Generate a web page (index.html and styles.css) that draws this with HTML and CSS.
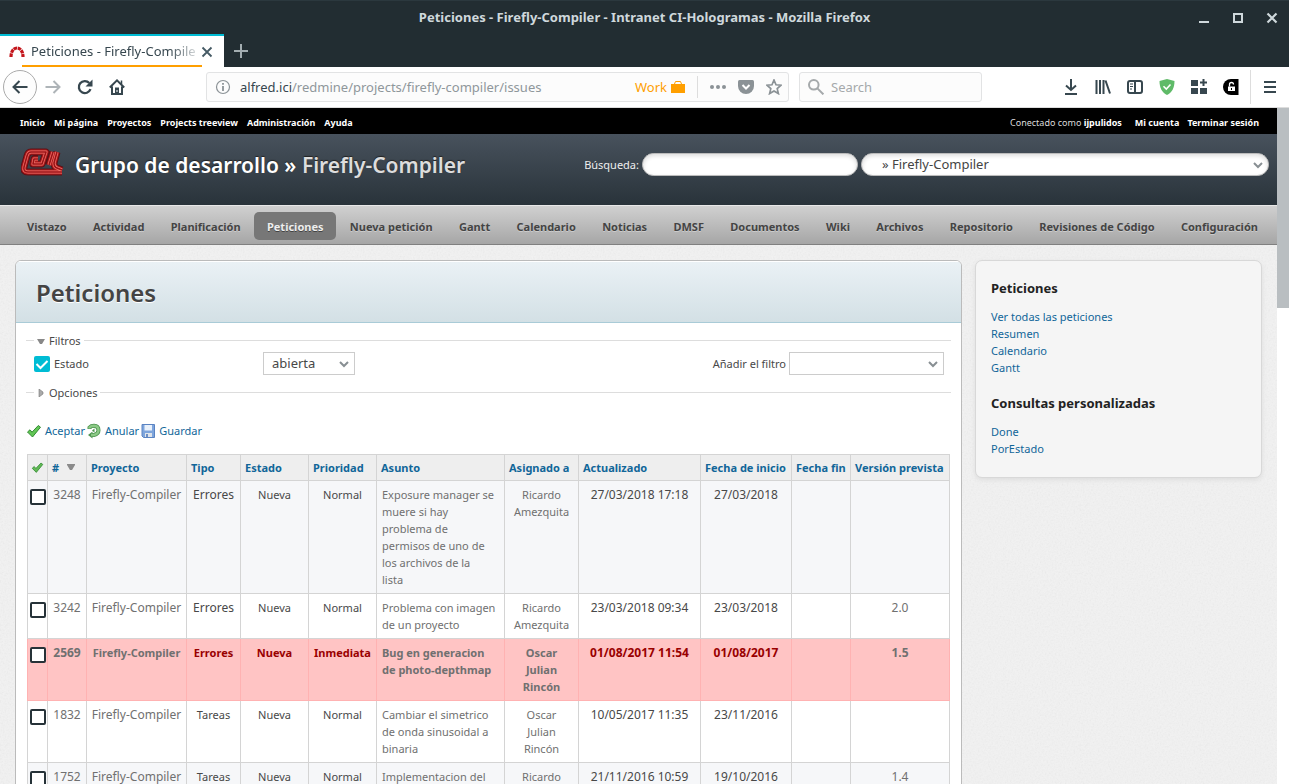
FILE: index.html
```html
<!DOCTYPE html>
<html lang="es">
<head>
<meta charset="utf-8">
<title>Peticiones - Firefly-Compiler - Intranet CI-Hologramas</title>
<link rel="stylesheet" href="styles.css">
</head>
<body>
<header class="browser">
  <div class="titlebar">
    <span class="window-title">Peticiones - Firefly-Compiler - Intranet CI-Hologramas - Mozilla Firefox</span>
    <div class="window-buttons">
      <button aria-label="Minimizar"><svg width="12" height="12" viewBox="0 0 12 12"><path d="M1 10h10" stroke-width="2"/></svg></button>
      <button aria-label="Maximizar"><svg width="12" height="12" viewBox="0 0 12 12"><rect x="2" y="2" width="8" height="8" stroke-width="2"/></svg></button>
      <button aria-label="Cerrar"><svg width="12" height="12" viewBox="0 0 12 12"><path d="M1.500 1.500l9 9m0-9l-9 9" stroke-width="2.200"/></svg></button>
    </div>
  </div>
  <div class="tabs">
    <div class="tab">
      <svg class="favicon" width="16" height="16" viewBox="0 0 16 16"><path d="M2 13c0-5.500 2.500-9 6-9s6 3.500 6 9" fill="none" stroke="#c4161c" stroke-width="3.200" stroke-dasharray="3.600 .6"/></svg>
      <span class="tab-title">Peticiones - Firefly-Compile</span>
      <button class="tab-close" aria-label="Cerrar pestaña"><svg width="12" height="12" viewBox="0 0 12 12"><path d="M1.500 1.500l9 9m0-9l-9 9" stroke-width="1.800"/></svg></button>
    </div>
    <button class="new-tab" aria-label="Nueva pestaña"><svg width="14" height="14" viewBox="0 0 14 14"><path d="M7 0v14M0 7h14" stroke-width="2"/></svg></button>
  </div>
  <div class="toolbar">
    <button class="back" aria-label="Atrás"><svg class="ico" viewBox="0 0 16 16"><path d="M15.500 8H1.500M7.500 2L1.500 8l6 6"/></svg></button>
    <button class="tool dim" aria-label="Adelante"><svg class="ico" viewBox="0 0 16 16"><path d="M.5 8h14M8.500 2l6 6-6 6"/></svg></button>
    <button class="tool" aria-label="Recargar"><svg class="ico" viewBox="0 0 16 16"><path d="M13.500 10.200A6 6 0 1 1 12.300 4" stroke-width="2.300"/><path class="solid" d="M15.500.5v7h-7z"/></svg></button>
    <button class="tool" aria-label="Inicio"><svg class="ico" viewBox="0 0 16 16"><path d="M.8 8.500L8 1.400l7.200 7.100M3 7.500V15h10V7.500"/><path class="solid" d="M6 8.500h4V15H6z"/><path d="M8 11v2" stroke="#fff" stroke-width="1"/><path d="M12.500 1.500V5" stroke-width="1.500"/></svg></button>
    <div class="urlbar">
      <svg class="ico grey info" viewBox="0 0 16 16"><circle cx="8" cy="8" r="6.500" stroke-width="1.200"/><path d="M8 7v5M8 4v1.800" stroke-width="1.800"/></svg>
      <span class="url">alfred.ici<span>/redmine/projects/firefly-compiler/issues</span></span>
      <span class="work">Work <svg width="14" height="14" viewBox="0 0 14 14"><path d="M0 4h14v9H0z" fill="#ff9f00"/><path d="M3.500 4l1-2.500h5l1 2.500" fill="none" stroke="#ff9f00"/></svg></span>
      <i class="divider"></i>
      <svg class="ico grey" viewBox="0 0 16 16"><circle class="solid" cx="2" cy="8" r="2"/><circle class="solid" cx="8" cy="8" r="2"/><circle class="solid" cx="14" cy="8" r="2"/></svg>
      <svg class="ico grey" viewBox="0 0 16 16"><path class="solid" d="M1.500 1h13Q16 1 16 2.500V7a8 8 0 0 1-16 0V2.500Q0 1 1.500 1z"/><path d="M4.500 6L8 9.500 11.500 6" stroke="#fff"/></svg>
      <svg class="ico grey" viewBox="0 0 16 16"><path d="M8 1l2 4.800 5 .4-3.800 3.400 1.200 5L8 12l-4.400 2.600 1.200-5L1 6.200l5-.4z" stroke-width="1.700"/></svg>
    </div>
    <label class="search-web">
      <svg class="ico" viewBox="0 0 16 16"><circle cx="5.800" cy="5.800" r="4.800"/><path d="M9.400 9.400l6 6"/></svg>
      <input type="text" placeholder="Search" aria-label="Search">
    </label>
    <div class="extensions">
      <button class="tool" aria-label="Descargas"><svg class="ico" viewBox="0 0 16 16"><path d="M8 0v11M3 6.500L8 11l5-4.500M2 15h12"/></svg></button>
      <button class="tool" aria-label="Catálogo"><svg class="ico" viewBox="0 0 16 16"><path d="M1.500 1v14M5 1v14M8.500 1v14M10.500 1.500l4.500 13"/></svg></button>
      <button class="tool" aria-label="Barra lateral"><svg class="ico" viewBox="0 0 16 16"><rect x="1" y="2" width="14" height="12" rx="2"/><path d="M8 2v12"/><path d="M3 5h3M3 7.500h3M3 10h2" stroke-width="1"/></svg></button>
      <button class="tool" aria-label="Protección"><svg class="ico" viewBox="0 0 16 16"><path d="M8 0l7.500 2c0 7-2.500 11.500-7.500 14C3 13.500.5 9 .5 2z" fill="#5fba68" stroke="none"/><path d="M4.500 7.200l2.800 2.800 4.200-4.500" stroke="#fff" stroke-width="1.600"/></svg></button>
      <button class="tool" aria-label="Complementos"><svg class="ico" viewBox="0 0 16 16"><path class="solid" d="M0 1h7v6H0zM0 9h7v6H0zM9 9h7v6H9z"/><path d="M12.500 0v7M9 3.500h7"/></svg></button>
      <button class="tool" aria-label="Contraseñas"><svg class="ico" viewBox="0 0 16 16"><path d="M8 0h7.500v16H8A8 8 0 0 1 8 0z" fill="#000" stroke="none"/><path d="M5 7.500h7V12H5z" fill="#fff" stroke="none"/><path d="M6.500 7.500V5.500q0-2 2-2t2 2" stroke="#fff" stroke-width="1.300"/><path d="M8.500 9v2" stroke="#000" stroke-width="1"/></svg></button>
      <i class="divider tall"></i>
      <button class="tool" aria-label="Menú"><svg class="ico" viewBox="0 0 16 16"><path d="M2 3h12M2 8h12M2 13h12"/></svg></button>
    </div>
  </div>
</header>
<div class="viewport">
  <div class="page">
    <nav class="topmenu">
      <div class="links"><a href="#">Inicio</a><a href="#">Mi página</a><a href="#">Proyectos</a><a href="#">Projects treeview</a><a href="#">Administración</a><a href="#">Ayuda</a></div>
      <div class="links account"><span>Conectado como <a href="#">ijpulidos</a></span><a href="#">Mi cuenta</a><a href="#">Terminar sesión</a></div>
    </nav>
    <div class="banner">
      <svg class="logo" width="44" height="30" viewBox="0 0 44 30"><defs><path id="mark" d="M17 12h-4l-1 5h9l4-12H10Q7 5 6 9L3 20q-1 5 4 5h34M36 5l-3 11q0 4 3 5l5 2M32 5l-4 13"/></defs><g fill="none" stroke-linejoin="round"><use href="#mark" stroke="#5e1015" stroke-width="7"/><use href="#mark" stroke="#b01a1c" stroke-width="5"/><use href="#mark" stroke="#f0746c" stroke-width="3"/><use href="#mark" stroke="#9c1216" stroke-width="1.600"/></g></svg>
      <h1>Grupo de desarrollo » <span>Firefly-Compiler</span></h1>
      <form class="quick">
        <label for="q">Búsqueda:</label>
        <input id="q" type="text">
        <select aria-label="Proyecto"><option>» Firefly-Compiler</option></select>
      </form>
    </div>
    <nav class="mainmenu">
      <a href="#">Vistazo</a><a href="#">Actividad</a><a href="#">Planificación</a><a href="#" class="selected">Peticiones</a><a href="#">Nueva petición</a><a href="#">Gantt</a><a href="#">Calendario</a><a href="#">Noticias</a><a href="#">DMSF</a><a href="#">Documentos</a><a href="#">Wiki</a><a href="#">Archivos</a><a href="#">Repositorio</a><a href="#">Revisiones de Código</a><a href="#">Configuración</a>
    </nav>
    <div class="main">
      <main class="content">
        <h2>Peticiones</h2>
        <form class="query">
          <fieldset>
            <legend><svg width="8" height="8" viewBox="0 0 8 8"><path d="M0 2h8L5 7H3z" fill="#888"/></svg>Filtros</legend>
            <div class="filters">
              <label class="filter"><input type="checkbox" class="check" checked>Estado</label>
              <select class="operator" aria-label="Operador"><option>abierta</option></select>
              <label class="add" for="add">Añadir el filtro</label>
              <select id="add" class="add-filter"><option></option></select>
            </div>
          </fieldset>
          <fieldset class="options">
            <legend><svg width="8" height="8" viewBox="0 0 8 8"><path d="M2 0l4 3v2L2 8z" fill="#aaa" stroke="#777" stroke-width=".6"/></svg>Opciones</legend>
          </fieldset>
          <p class="actions">
            <a href="#"><svg width="16" height="16" viewBox="0 0 16 16"><path d="M1.500 9L4 6.800l2 2.400 6.300-6.700 2.200 1.700L6.500 14z" fill="#62c655" stroke="#338b34"/></svg>Aceptar</a>
            <a href="#"><svg width="16" height="16" viewBox="0 0 16 16"><path d="M3.500 6V4.500Q5 2.800 8 2.800q4.500.3 4.500 4.500 0 3.700-4.500 4.700H6" fill="none" stroke="#4f9450" stroke-width="4"/><path d="M6.500 8.500v7L2 12z" fill="#4f9450"/><path d="M3.500 5.500V4.500Q5 2.800 8 2.800q4.500.3 4.500 4.500 0 3.700-4.500 4.700H5" fill="none" stroke="#8bc985" stroke-width="2.400"/><path d="M8.500 5.500v4L6 7.500z" fill="#4f9450"/></svg>Anular</a>
            <a href="#"><svg width="16" height="16" viewBox="0 0 16 16"><path d="M2 1.500h12.500v13H3.500L2 13z" fill="#7ea5dc" stroke="#5a83c2"/><path d="M4.500 2h7.500v5.500H4.500z" fill="#e9f1fb"/><path d="M5 10h7v4H5z" fill="#dfe4ea"/><path d="M6 11h2v3H6z" fill="#6d8fc4"/></svg>Guardar</a>
          </p>
        </form>
        <table class="issues">
          <colgroup><col class="c-check"><col class="c-id"><col class="c-project"><col class="c-tracker"><col class="c-status"><col class="c-priority"><col><col class="c-assigned"><col class="c-updated"><col class="c-start"><col class="c-due"><col class="c-version"></colgroup>
          <thead><tr><th class="tick"><svg width="13" height="13" viewBox="0 0 16 16"><path d="M1.500 9L4 6.800l2 2.400 6.300-6.700 2.200 1.700L6.500 14z" fill="#62b955" stroke="#338b34"/></svg></th><th><a href="#">#<svg class="sort" width="8" height="6" viewBox="0 0 8 6"><path d="M0 0h8v1L5 6H3L0 1z" fill="#8a8a8a"/></svg></a></th><th><a href="#">Proyecto</a></th><th><a href="#">Tipo</a></th><th><a href="#">Estado</a></th><th><a href="#">Prioridad</a></th><th><a href="#">Asunto</a></th><th><a href="#">Asignado a</a></th><th><a href="#">Actualizado</a></th><th><a href="#">Fecha de inicio</a></th><th><a href="#">Fecha fin</a></th><th><a href="#">Versión prevista</a></th></tr></thead>
          <tbody>
            <tr class="odd"><td class="tick"><input type="checkbox" class="check" aria-label="3248"></td><td class="wide"><a href="#">3248</a></td><td class="wide"><a href="#">Firefly-Compiler</a></td><td class="wide">Errores</td><td>Nueva</td><td>Normal</td><td class="subject"><a href="#">Exposure manager se<br>muere si hay<br>problema de<br>permisos de uno de<br>los archivos de la<br>lista</a></td><td><a href="#">Ricardo Amezquita</a></td><td class="wide">27/03/2018 17:18</td><td class="wide">27/03/2018</td><td></td><td></td></tr>
            <tr><td class="tick"><input type="checkbox" class="check" aria-label="3242"></td><td class="wide"><a href="#">3242</a></td><td class="wide"><a href="#">Firefly-Compiler</a></td><td class="wide">Errores</td><td>Nueva</td><td>Normal</td><td class="subject"><a href="#">Problema con imagen<br>de un proyecto</a></td><td><a href="#">Ricardo Amezquita</a></td><td class="wide">23/03/2018 09:34</td><td class="wide">23/03/2018</td><td></td><td class="wide"><a href="#">2.0</a></td></tr>
            <tr class="urgent"><td class="tick"><input type="checkbox" class="check" aria-label="2569"></td><td class="wide"><a href="#">2569</a></td><td><a href="#">Firefly-Compiler</a></td><td>Errores</td><td>Nueva</td><td>Inmediata</td><td class="subject"><a href="#">Bug en generacion<br>de photo-depthmap</a></td><td><a href="#">Oscar<br>Julian<br>Rincón</a></td><td class="wide">01/08/2017 11:54</td><td class="wide">01/08/2017</td><td></td><td class="wide"><a href="#">1.5</a></td></tr>
            <tr><td class="tick"><input type="checkbox" class="check" aria-label="1832"></td><td class="wide"><a href="#">1832</a></td><td class="wide"><a href="#">Firefly-Compiler</a></td><td>Tareas</td><td>Nueva</td><td>Normal</td><td class="subject"><a href="#">Cambiar el simetrico<br>de onda sinusoidal a<br>binaria</a></td><td><a href="#">Oscar<br>Julian<br>Rincón</a></td><td class="wide">10/05/2017 11:35</td><td class="wide">23/11/2016</td><td></td><td></td></tr>
            <tr class="odd last"><td class="tick"><input type="checkbox" class="check" aria-label="1752"></td><td class="wide"><a href="#">1752</a></td><td class="wide"><a href="#">Firefly-Compiler</a></td><td>Tareas</td><td>Nueva</td><td>Normal</td><td class="subject"><a href="#">Implementacion del</a></td><td><a href="#">Ricardo</a></td><td class="wide">21/11/2016 10:59</td><td class="wide">19/10/2016</td><td></td><td class="wide"><a href="#">1.4</a></td></tr>
          </tbody>
        </table>
      </main>
      <aside class="sidebar">
        <h3>Peticiones</h3>
        <a href="#">Ver todas las peticiones</a><a href="#">Resumen</a><a href="#">Calendario</a><a href="#">Gantt</a>
        <h3>Consultas personalizadas</h3>
        <a href="#">Done</a><a href="#">PorEstado</a>
      </aside>
    </div>
  </div>
  <div class="scrollbar"><i></i></div>
</div>
</body>
</html>
```
FILE: styles.css
```css
* { box-sizing: border-box; }
body { margin: 0; height: 100vh; overflow: hidden; display: flex; flex-direction: column; font: 12px/17px "Noto Sans", sans-serif; color: #484848; background: #fff; }
button { border: 0; background: none; padding: 0; display: flex; align-items: center; justify-content: center; }
a { text-decoration: none; color: #116699; }
h1, h2, h3, p { margin: 0; }
svg { flex: none; }
input, select { font: inherit; color: inherit; margin: 0; }

/* Browser window */
.browser { flex: none; background: #222d32; font-size: 13px; }
.titlebar { height: 34px; display: grid; grid-template-columns: 1fr auto 1fr; align-items: center; border-top: 1px solid #2b383e; color: #cfd8dc; font-weight: bold; }
.window-title { grid-column: 2; }
.window-buttons { display: flex; justify-content: flex-end; gap: 22px; padding-right: 11px; }
.window-buttons svg { fill: none; stroke: #cfd8dc; }
.tabs { display: flex; height: 33px; }
.tab { position: relative; width: 224px; padding: 0 11px 0 9px; display: flex; align-items: center; background: #fff; border-top: 2px solid #00bcd4; color: #37474f; }
.tab::after { content: ""; position: absolute; left: 22px; right: 22px; bottom: 0; height: 2px; background: #ff9f00; }
.tab-title { flex: 1; margin-left: 6px; white-space: nowrap; mask-image: linear-gradient(90deg, #000 84%, transparent 104%); }
.tab-close { margin-left: 5px; }
.tab-close svg { stroke: #455a64; }
.new-tab { width: 34px; }
.new-tab svg { stroke: #a3adb1; }
.toolbar { height: 41px; display: flex; align-items: center; padding: 0 11px 0 3px; background: #fff; border-bottom: 1px solid #ddd; }
.ico { width: 16px; height: 16px; fill: none; stroke: #37474f; stroke-width: 2; }
.ico .solid { fill: #37474f; stroke: none; }
.ico.grey { stroke: #8b9296; }
.ico.grey .solid { fill: #8b9296; }
.back { width: 34px; height: 34px; border: 1px solid #aaa; border-radius: 50%; background: #fdfdfd; }
.tool { width: 32px; height: 32px; }
.dim { opacity: .4; }
.urlbar { flex: 1; min-width: 0; height: 30px; margin-left: 73px; padding: 0 6px 0 8px; display: flex; align-items: center; gap: 12px; border: 1px solid #e2e3e4; border-radius: 3px; background: #fcfcfc; }
.url { flex: 1; margin-left: -3px; color: #37474f; white-space: nowrap; }
.url span { color: #8f979b; }
.work { color: #ff9f00; display: flex; align-items: center; gap: 4px; }
.divider { width: 1px; height: 22px; background: #ddd; }
.divider.tall { height: 34px; margin: 0 3px; }
.search-web { width: 183px; height: 30px; margin-left: 10px; padding: 0 8px; display: flex; align-items: center; gap: 7px; border: 1px solid #e2e3e4; border-radius: 3px; background: #fcfcfc; }
.search-web .ico { stroke: #a5a9ab; }
.search-web input { min-width: 0; flex: 1; border: 0; padding: 0; background: none; }
.search-web input::placeholder { color: #a5a9ab; }
.extensions { display: flex; align-items: center; margin-left: 73px; }
.extensions .tool:last-child { width: 16px; margin-left: 8px; }

/* Page frame */
.viewport { flex: 1; min-height: 0; display: flex; }
.page { flex: 1; min-width: 0; overflow: hidden; background-color: #f2f2f2; background-image: url("data:image/svg+xml,%3Csvg xmlns='http://www.w3.org/2000/svg' width='120' height='120'%3E%3Cfilter id='n'%3E%3CfeTurbulence type='fractalNoise' baseFrequency='.6' numOctaves='2' stitchTiles='stitch'/%3E%3CfeColorMatrix type='saturate' values='0'/%3E%3C/filter%3E%3Crect width='120' height='120' filter='url(%23n)' opacity='.12'/%3E%3C/svg%3E"); }
.scrollbar { width: 12px; background: #fff; }
.scrollbar i { display: block; height: 200px; background: #b9bec1; }
.topmenu { display: flex; justify-content: space-between; align-items: center; height: 26px; padding: 3px 18px 0 20px; background: #000; color: #ddd; font-size: 9px; }
.links { display: flex; gap: 9px; }
.links.account { gap: 8px; }
.links.account > span { margin-right: 5px; }
.links a { color: #fff; font-weight: bold; }
.banner { height: 71px; padding: 0 8px 10px 21px; display: flex; align-items: center; background: linear-gradient(#48525d, #29333a); color: #eee; }
.logo { margin-bottom: 6px; }
.banner h1 { margin-left: 10px; font-size: 21px; line-height: 28px; font-weight: 600; color: #fff; text-shadow: 0 -1px 1px #222; }
.banner h1 span { color: #ddd; }
.quick { margin-left: auto; display: flex; align-items: center; gap: 3px; font-size: 11px; }
.quick input, .quick select { height: 23px; border: 1px solid #bbb; border-radius: 12px; background-color: #fff; box-shadow: inset 0 2px 4px #ddd; color: #444; }
.quick input { width: 216px; }
.quick select { width: 408px; padding-left: 20px; font-size: 13px; }
select { appearance: none; border: 1px solid #ccc; border-radius: 0; background: #fff url("data:image/svg+xml,%3Csvg xmlns='http://www.w3.org/2000/svg' width='12' height='8'%3E%3Cpath d='M2 2l4 4 4-4' fill='none' stroke='%23888f93' stroke-width='2'/%3E%3C/svg%3E") no-repeat right 4px center; }
.mainmenu { height: 40px; padding: 1px 7px 0 14px; display: flex; align-items: center; justify-content: space-between; background: linear-gradient(#d0d0d0, #a6a6a6); border-top: 1px solid #e8e8e8; border-bottom: 1px solid #808080; font-size: 11px; font-weight: bold; }
.mainmenu a { padding: 6px 12px 5px 13px; color: #444; text-shadow: 0 1px 0 #ccc; white-space: nowrap; }
.mainmenu .selected { border-radius: 5px; background: #777; color: #eee; text-shadow: 0 1px 0 #444; }
.main { display: flex; align-items: flex-start; gap: 13px; padding: 15px; }

/* Issue list */
.content { flex: 1; min-width: 0; min-height: 560px; border: 1px solid #bbb; border-radius: 6px 6px 0 0; background: #fff; overflow: hidden; }
.content h2 { height: 62px; padding: 15px 20px; font-size: 24px; line-height: 32px; font-weight: 600; color: #444; background: linear-gradient(#eaf1f5, #d3e0e5); border-bottom: 1px solid #a9cbd7; border-top: 1px solid #fff; text-shadow: 0 1px 0 #fff; }
.query { padding: 9px 10px 0; font-size: 11px; }
fieldset { margin: 0; border: 0; border-top: 1px solid #ddd; padding: 0 7px 0 8px; min-width: 0; }
legend { padding: 0 3px; display: flex; align-items: center; gap: 4px; }
.query .options { margin-top: 9px; }
.filters { display: flex; align-items: center; padding-top: 3px; }
.filter { width: 229px; display: flex; align-items: center; gap: 4px; }
.filters select { height: 23px; font-size: 13px; }
.filters .operator { width: 92px; padding-left: 8px; }
.add { margin-left: auto; }
.filters .add-filter { width: 155px; margin-left: 3px; }
.check { appearance: none; width: 16px; height: 16px; border: 2px solid #263238; border-radius: 2px; background: #fff; }
.check:checked { border: 0; background: #00bcd4 url("data:image/svg+xml,%3Csvg xmlns='http://www.w3.org/2000/svg' width='16' height='16'%3E%3Cpath d='M2.500 8l4 4 7-7' fill='none' stroke='white' stroke-width='2'/%3E%3C/svg%3E"); }
.actions { display: flex; gap: 1px; padding: 21px 0 15px; }
.actions a { display: flex; align-items: center; gap: 3px; }
.issues { width: calc(100% - 22px); margin-left: 11px; table-layout: fixed; border-collapse: collapse; font-size: 11px; }
.c-check { width: 20px; }
.c-id { width: 39px; }
.c-project { width: 100px; }
.c-tracker { width: 54px; }
.c-status, .c-priority { width: 68px; }
.c-assigned { width: 74px; }
.c-updated { width: 122px; }
.c-start { width: 91px; }
.c-due { width: 59px; }
.c-version { width: 99px; }
.issues th { padding: 4px; text-align: left; white-space: nowrap; background: #eee; border: 1px solid #d4d4d4; }
.issues td { padding: 5px 2px; text-align: center; vertical-align: top; border: 1px solid #d4d4d4; }
.issues td.subject { text-align: left; padding-left: 5px; white-space: nowrap; }
.issues td.wide { font-size: 12px; white-space: nowrap; }
.issues .tick { padding: 3px 0 0; text-align: center; }
.issues td.tick { padding-top: 8px; line-height: 0; }
.issues td a { color: #707070; }
.issues .last { height: 62px; }
.sort { margin: 0 0 2px 8px; }
.odd { background: #f6f7f9; }
.urgent { background: #ffc4c4; color: #900; font-weight: bold; }
.issues .urgent td { border-color: #ffb2b2; }
.sidebar { width: 287px; min-height: 218px; padding: 17px 15px 20px; display: flex; flex-direction: column; border: 1px solid #d8d8d8; border-radius: 7px; background: #f5f5f5; box-shadow: 0 2px 5px #ddd; font-size: 11px; }
.sidebar h3 { font-size: 13px; line-height: 20px; margin-bottom: 10px; color: #222; font-weight: bold; }
.sidebar a + h3 { margin-top: 17px; }
```
